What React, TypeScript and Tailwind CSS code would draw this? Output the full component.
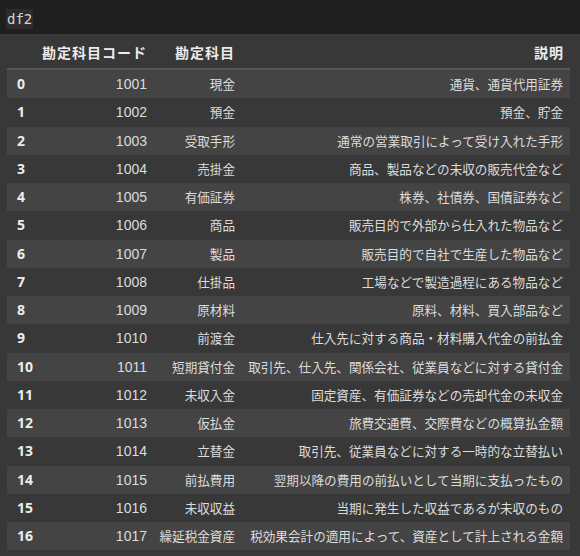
const rows: [string, string, string][] = [
  ['1001', '現金', '通貨、通貨代用証券'],
  ['1002', '預金', '預金、貯金'],
  ['1003', '受取手形', '通常の営業取引によって受け入れた手形'],
  ['1004', '売掛金', '商品、製品などの未収の販売代金など'],
  ['1005', '有価証券', '株券、社債券、国債証券など'],
  ['1006', '商品', '販売目的で外部から仕入れた物品など'],
  ['1007', '製品', '販売目的で自社で生産した物品など'],
  ['1008', '仕掛品', '工場などで製造過程にある物品など'],
  ['1009', '原材料', '原料、材料、買入部品など'],
  ['1010', '前渡金', '仕入先に対する商品・材料購入代金の前払金'],
  ['1011', '短期貸付金', '取引先、仕入先、関係会社、従業員などに対する貸付金'],
  ['1012', '未収入金', '固定資産、有価証券などの売却代金の未収金'],
  ['1013', '仮払金', '旅費交通費、交際費などの概算払金額'],
  ['1014', '立替金', '取引先、従業員などに対する一時的な立替払い'],
  ['1015', '前払費用', '翌期以降の費用の前払いとして当期に支払ったもの'],
  ['1016', '未収収益', '当期に発生した収益であるが未収のもの'],
  ['1017', '繰延税金資産', '税効果会計の適用によって、資産として計上される金額'],
];

const font = { fontFamily: '"Noto Sans CJK JP", "Noto Sans", sans-serif' };

export default function App() {
  return (
    <div className="w-[580px] h-[556px] bg-[#383838] overflow-hidden" style={font}>
      {/* cell label bar */}
      <div className="h-[34px] bg-[#1f1f1f] pl-[6px] pt-[5px]">
        <span className="inline-block h-[20px] px-[1px] bg-[#2c2c2c] text-[#d4d4d4] text-[14px] leading-[20px] font-['DejaVu_Sans_Mono',monospace]">
          df2
        </span>
      </div>

      <div className="mx-[7px] w-[563px]">
        <div className="grid grid-cols-[29px_117px_88px_1fr] h-[36px] items-end pb-[6px] border-b-2 border-[#575757] text-[#ececec] text-[14px] font-bold tracking-[1px] leading-[20px]">
          <div></div>
          <div className="text-right pr-[6px]">勘定科目コード</div>
          <div className="text-right pr-[6px]">勘定科目</div>
          <div className="text-right pr-[6px]">説明</div>
        </div>
        {rows.map(([code, name, desc], i) => (
          <div
            key={code}
            className={
              'grid grid-cols-[29px_117px_88px_1fr] h-[28.25px] items-center text-[12.6px] leading-[18px] text-[#dcdcdc] ' +
              (i % 2 === 0 ? 'bg-[#444444]' : 'bg-[#383838]')
            }
          >
            <div className="pl-[10px] font-bold text-[#ececec] text-[14px] font-['Noto_Sans',sans-serif] whitespace-nowrap">{i}</div>
            <div className="text-right pr-[6px] font-['Liberation_Sans',sans-serif] text-[14px]">{code}</div>
            <div className="text-right pr-[6px] whitespace-nowrap">{name}</div>
            <div className="text-right pr-[7px] whitespace-nowrap">{desc}</div>
          </div>
        ))}
      </div>
    </div>
  );
}
